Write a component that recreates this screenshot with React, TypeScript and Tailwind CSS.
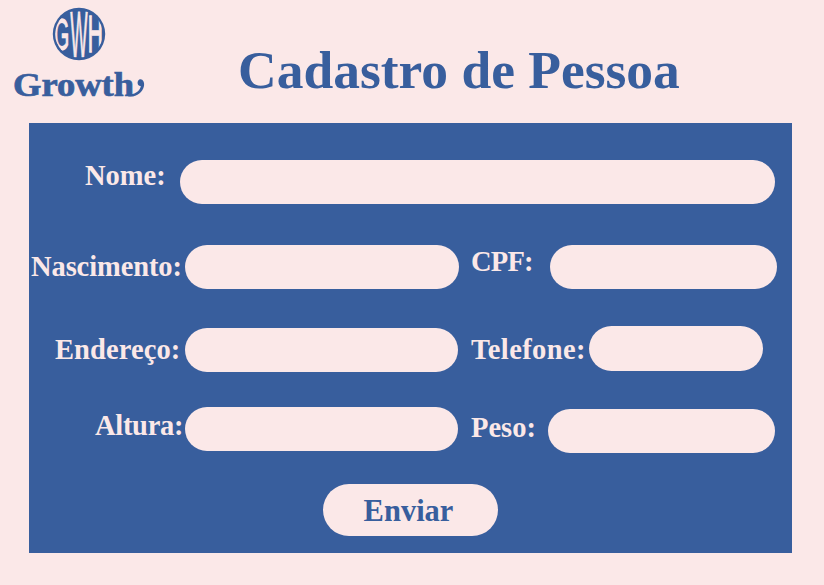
import React from "react";

const serif = "font-['Liberation_Serif',serif]";

function Label({ text, className }: { text: string; className: string }) {
  return (
    <label
      className={`${serif} block shrink-0 whitespace-nowrap text-[28.5px] font-bold leading-none text-[#fbe8e8] ${className}`}
    >
      {text}
    </label>
  );
}

function Field({ name, className }: { name: string; className: string }) {
  return (
    <input
      aria-label={name}
      className={`block shrink-0 rounded-full bg-[#fbe8e8] px-5 text-[#385e9d] outline-none ${className}`}
    />
  );
}

function Logo() {
  return (
    <svg width="150" height="110" viewBox="0 0 150 110" className="shrink-0" fill="#385e9d">
      <defs>
        <clipPath id="disc">
          <circle cx="79" cy="34" r="23.8" />
        </clipPath>
      </defs>
      <circle cx="79" cy="34" r="26.2" />
      <g
        clipPath="url(#disc)"
        fill="#fbe8e8"
        stroke="#fbe8e8"
        fontFamily="Liberation Sans, sans-serif"
        fontSize="20"
      >
        <text transform="translate(54 49.500) scale(0.98 2.2)" strokeWidth="0.6">G</text>
        <text transform="translate(70.300 57) scale(0.92 3.25)" strokeWidth="0.3">W</text>
        <text transform="translate(87.8 52) scale(1.05 2.6)" strokeWidth="0.6">H</text>
      </g>
      <text
        x="13"
        y="96"
        fontFamily="Liberation Serif, serif"
        fontWeight="700"
        fontSize="33"
        textLength="121"
        lengthAdjust="spacingAndGlyphs"
        stroke="#385e9d"
        strokeWidth="0.7"
      >
        Growth
      </text>
      <path
        d="M128 94C135 95.500 140.500 90 140.800 86C137.500 86.500 136.500 81.500 139 79.800C142 78 144.800 81.500 144 86C142.500 93 136 97.500 128 96.300Z"
      />
    </svg>
  );
}

export default function App() {
  return (
    <main className="h-[585px] w-[824px] overflow-hidden bg-[#fbe8e8]">
      <header className="flex h-[123px] items-start">
        <Logo />
        <h1
          className={`${serif} ml-[88px] mt-[44px] whitespace-nowrap text-[53.5px] font-bold leading-none text-[#385e9d]`}
        >
          Cadastro de Pessoa
        </h1>
      </header>
      <form className="ml-[29px] h-[430px] w-[763px] bg-[#385e9d] pt-[37px]">
        <div className="flex h-[85px] items-start">
          <Label text="Nome:" className="ml-[56px] mt-[2px] w-[95px]" />
          <Field name="Nome" className="h-[44px] w-[595px]" />
        </div>
        <div className="flex h-[81px] items-start">
          <Label text="Nascimento:" className="ml-[2px] mt-[8px] w-[154px] tracking-[-0.1px]" />
          <Field name="Nascimento" className="h-[44px] w-[274px]" />
          <Label text="CPF:" className="ml-[12px] mt-[3px] w-[79px] tracking-[-0.8px]" />
          <Field name="CPF" className="h-[44px] w-[227px]" />
        </div>
        <div className="flex h-[81px] items-start">
          <Label text="Endereço:" className="ml-[26px] mt-[10px] w-[130px] tracking-[0.1px]" />
          <Field name="Endereço" className="mt-[2px] h-[44px] w-[273px]" />
          <Label text="Telefone:" className="ml-[13px] mt-[10px] w-[118px] tracking-[0.4px]" />
          <Field name="Telefone" className="h-[45px] w-[174px]" />
        </div>
        <div className="flex h-[77px] items-start">
          <Label text="Altura:" className="ml-[66px] mt-[5px] w-[90px] tracking-[-0.3px]" />
          <Field name="Altura" className="h-[44px] w-[273px]" />
          <Label text="Peso:" className="ml-[13px] mt-[7px] w-[77px]" />
          <Field name="Peso" className="mt-[2px] h-[44px] w-[227px]" />
        </div>
        <button
          type="button"
          className={`${serif} ml-[294px] flex h-[52px] w-[175px] items-center justify-center rounded-full bg-[#fbe8e8] pr-1 pt-0.5 text-[30.5px] font-bold leading-none text-[#385e9d]`}
        >
          Enviar
        </button>
      </form>
    </main>
  );
}
